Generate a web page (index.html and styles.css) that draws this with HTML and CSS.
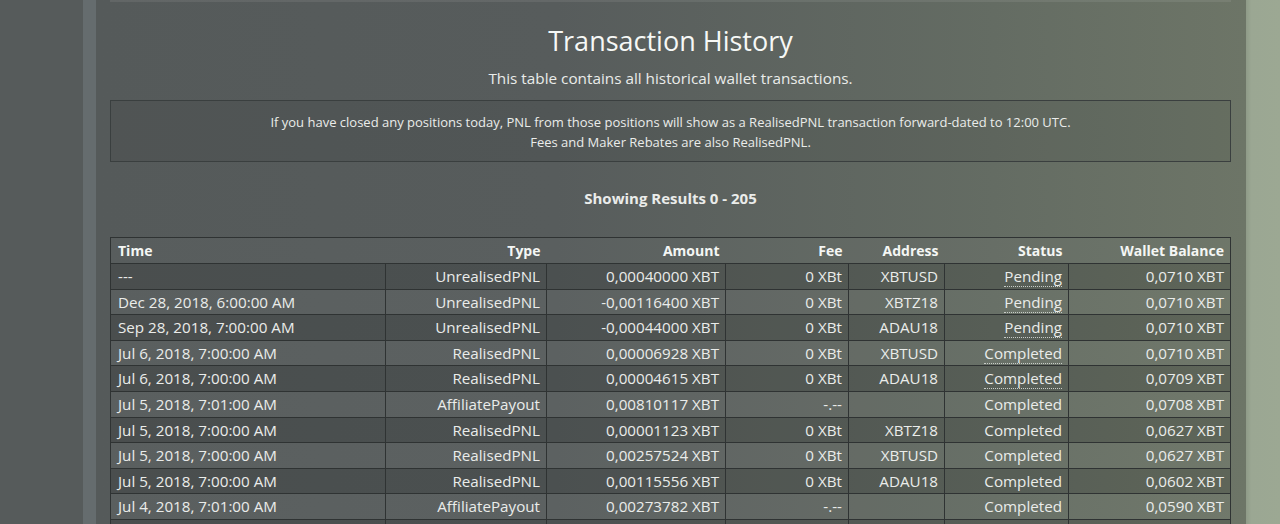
FILE: index.html
```html
<!DOCTYPE html>
<html lang="en">
<head>
    <meta charset="UTF-8">
    <meta name="viewport" content="width=device-width, initial-scale=1.0">
    <title>Transaction History</title>
    <link rel="stylesheet" href="styles.css">
</head>
<body>
    <div class="page">
        <div class="gutter"></div>
        <div class="strip"></div>
        <div class="panel">
            <div class="top-edge"></div>
            <h1 class="title">Transaction History</h1>
            <p class="subtitle">This table contains all historical wallet transactions.</p>

            <div class="notice">
                <div>If you have closed any positions today, PNL from those positions will show as a RealisedPNL transaction forward-dated to 12:00 UTC.</div>
                <div>Fees and Maker Rebates are also RealisedPNL.</div>
            </div>

            <div class="results">Showing Results 0 - 205</div>

            <table class="history">
                <colgroup>
                    <col class="c-time">
                    <col class="c-type">
                    <col class="c-amount">
                    <col class="c-fee">
                    <col class="c-address">
                    <col class="c-status">
                    <col class="c-balance">
                </colgroup>
                <thead>
                    <tr>
                        <th class="left">Time</th>
                        <th>Type</th>
                        <th>Amount</th>
                        <th>Fee</th>
                        <th>Address</th>
                        <th>Status</th>
                        <th>Wallet Balance</th>
                    </tr>
                </thead>
                <tbody>
                    <tr>
                        <td class="left">---</td>
                        <td>UnrealisedPNL</td>
                        <td>0,00040000 XBT</td>
                        <td>0 XBt</td>
                        <td>XBTUSD</td>
                        <td><span class="tip">Pending</span></td>
                        <td>0,0710 XBT</td>
                    </tr>
                    <tr>
                        <td class="left">Dec 28, 2018, 6:00:00 AM</td>
                        <td>UnrealisedPNL</td>
                        <td>-0,00116400 XBT</td>
                        <td>0 XBt</td>
                        <td>XBTZ18</td>
                        <td><span class="tip">Pending</span></td>
                        <td>0,0710 XBT</td>
                    </tr>
                    <tr>
                        <td class="left">Sep 28, 2018, 7:00:00 AM</td>
                        <td>UnrealisedPNL</td>
                        <td>-0,00044000 XBT</td>
                        <td>0 XBt</td>
                        <td>ADAU18</td>
                        <td><span class="tip">Pending</span></td>
                        <td>0,0710 XBT</td>
                    </tr>
                    <tr>
                        <td class="left">Jul 6, 2018, 7:00:00 AM</td>
                        <td>RealisedPNL</td>
                        <td>0,00006928 XBT</td>
                        <td>0 XBt</td>
                        <td>XBTUSD</td>
                        <td><span class="tip">Completed</span></td>
                        <td>0,0710 XBT</td>
                    </tr>
                    <tr>
                        <td class="left">Jul 6, 2018, 7:00:00 AM</td>
                        <td>RealisedPNL</td>
                        <td>0,00004615 XBT</td>
                        <td>0 XBt</td>
                        <td>ADAU18</td>
                        <td><span class="tip">Completed</span></td>
                        <td>0,0709 XBT</td>
                    </tr>
                    <tr>
                        <td class="left">Jul 5, 2018, 7:01:00 AM</td>
                        <td>AffiliatePayout</td>
                        <td>0,00810117 XBT</td>
                        <td>-.--</td>
                        <td></td>
                        <td>Completed</td>
                        <td>0,0708 XBT</td>
                    </tr>
                    <tr>
                        <td class="left">Jul 5, 2018, 7:00:00 AM</td>
                        <td>RealisedPNL</td>
                        <td>0,00001123 XBT</td>
                        <td>0 XBt</td>
                        <td>XBTZ18</td>
                        <td>Completed</td>
                        <td>0,0627 XBT</td>
                    </tr>
                    <tr>
                        <td class="left">Jul 5, 2018, 7:00:00 AM</td>
                        <td>RealisedPNL</td>
                        <td>0,00257524 XBT</td>
                        <td>0 XBt</td>
                        <td>XBTUSD</td>
                        <td>Completed</td>
                        <td>0,0627 XBT</td>
                    </tr>
                    <tr>
                        <td class="left">Jul 5, 2018, 7:00:00 AM</td>
                        <td>RealisedPNL</td>
                        <td>0,00115556 XBT</td>
                        <td>0 XBt</td>
                        <td>ADAU18</td>
                        <td>Completed</td>
                        <td>0,0602 XBT</td>
                    </tr>
                    <tr>
                        <td class="left">Jul 4, 2018, 7:01:00 AM</td>
                        <td>AffiliatePayout</td>
                        <td>0,00273782 XBT</td>
                        <td>-.--</td>
                        <td></td>
                        <td>Completed</td>
                        <td>0,0590 XBT</td>
                    </tr>
                    <tr>
                        <td class="left"></td>
                        <td></td>
                        <td></td>
                        <td></td>
                        <td></td>
                        <td></td>
                        <td></td>
                    </tr>
                </tbody>
            </table>
        </div>
        <div class="outside"></div>
    </div>
</body>
</html>
```

FILE: styles.css
```css
html, body {
    margin: 0;
    height: 100%;
    overflow: hidden;
}
body {
    font-family: "Open Sans", "Liberation Sans", sans-serif;
    color: #eaecea;
    background: #565b5b;
}
.page {
    display: flex;
    min-height: 100%;
}
.gutter {
    width: 83px;
    flex: none;
    background: #565b5b;
}
.strip {
    width: 13px;
    flex: none;
    background: #656c6e;
}
.panel {
    flex: 1;
    padding: 0 15px 0 14px;
    background: linear-gradient(90deg, #555a5a 0%, #575c5c 40%, #646c63 78%, #6d7567 100%);
}
.outside {
    width: 35px;
    flex: none;
    background: linear-gradient(90deg, #8f9a88 0%, #9ba793 15%, #9ca893 100%);
}
.top-edge {
    height: 2px;
    background: rgba(255, 255, 255, 0.08);
}
.title {
    margin: 21px 0 0;
    font-size: 27px;
    font-weight: 400;
    line-height: 36px;
    text-align: center;
    color: #f6f8f6;
}
.subtitle {
    margin: 9px 0 0;
    font-size: 15.3px;
    line-height: 20px;
    text-align: center;
}
.notice {
    margin-top: 12px;
    padding: 11px 10px 9px;
    border: 1px solid #3a3f3f;
    background: rgba(0, 0, 0, 0.06);
    font-size: 13px;
    line-height: 20px;
    text-align: center;
}
.results {
    margin-top: 26px;
    font-size: 15px;
    font-weight: 700;
    line-height: 20px;
    text-align: center;
}
.history {
    margin-top: 29px;
    width: 100%;
    border-collapse: collapse;
    table-layout: fixed;
    font-size: 15.2px;
    border: 1px solid #2f3333;
}
.c-time { width: 275px; }
.c-type { width: 161px; }
.c-amount { width: 179px; }
.c-fee { width: 123px; }
.c-address { width: 96px; }
.c-status { width: 124px; }
.c-balance { width: 162px; }
.history th {
    padding: 0 6px;
    line-height: 25px;
    font-size: 14px;
    font-weight: 700;
    text-align: right;
    color: #f4f6f4;
    border-bottom: 1px solid #2f3333;
    background: rgba(255, 255, 255, 0.02);
}
.history td {
    padding: 0 6px;
    height: 24.6px;
    line-height: 24.6px;
    text-align: right;
    white-space: nowrap;
    border: 1px solid #2f3333;
}
.history .left {
    text-align: left;
    padding-left: 7px;
}
.history tbody tr:nth-child(odd) td {
    background: rgba(0, 0, 0, 0.13);
}
.history tbody tr:nth-child(even) td {
    background: rgba(255, 255, 255, 0.03);
}
.tip {
    border-bottom: 1px dotted #c8ccc8;
}
```
